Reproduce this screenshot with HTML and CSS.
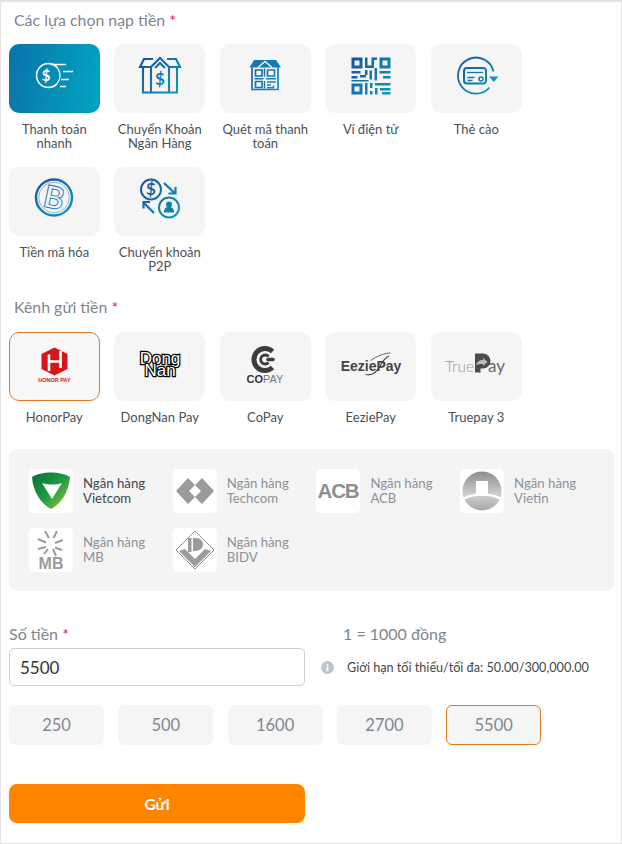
FILE: index.html
```html
<!DOCTYPE html>
<html lang="vi">
<head>
<meta charset="utf-8">
<title>Nạp tiền</title>
<link rel="stylesheet" href="styles.css">
</head>
<body>
<svg class="defs" aria-hidden="true"><defs>
<linearGradient id="bl" gradientUnits="userSpaceOnUse" x1="5" y1="3" x2="45" y2="40"><stop offset="0" stop-color="#1a4fa0"/><stop offset="1" stop-color="#0e9cc0"/></linearGradient>
<linearGradient id="vc" x1="0" y1="0" x2="1" y2="1"><stop offset="0" stop-color="#0b6f38"/><stop offset=".5" stop-color="#1f9a41"/><stop offset="1" stop-color="#9ccb3b"/></linearGradient>
<linearGradient id="vt" x1="0" y1="0" x2="0" y2="1"><stop offset="0" stop-color="#8c8c8c"/><stop offset=".6" stop-color="#cfcfcf"/><stop offset="1" stop-color="#a8a8a8"/></linearGradient>
</defs></svg>
<main class="page">
  <h2 class="head">Các lựa chọn nạp tiền <span class="req">*</span></h2>
  <div class="grid">
    <div class="opt"><div class="tile tile-on">
      <svg class="ico" viewBox="0 0 50 50" fill="none" stroke="#fff" stroke-width="1.500"><path d="M28 13A12 12 0 1 0 28 30"/><path d="M19 9.500A12 12 0 0 1 19 33.500" stroke-width="1.200"/><text x="17" y="27" class="t-dollar" fill="#fff" stroke="none">$</text><path d="M22 10.500h15M34 17.500h10M32 25.500h8M31 32.500h6"/></svg>
    </div><p class="cap">Thanh toán nhanh</p></div>
    <div class="opt"><div class="tile">
      <svg class="ico" viewBox="0 0 50 50" fill="none" stroke="url(#bl)" stroke-width="2.100"><path d="M16 13H5L9 5H18M32 5H41L45 13H34"/><path d="M8 13V38.500H42V13"/><path d="M16 38.500V13L25 4L34 13V38.500"/><path d="M20 14L25 9L30 14"/><text x="25" y="31" class="t-dollar big" fill="url(#bl)" stroke="none">$</text></svg>
    </div><p class="cap">Chuyển Khoản Ngân Hàng</p></div>
    <div class="opt"><div class="tile">
      <svg class="ico" viewBox="0 0 50 50" fill="none" stroke="url(#bl)" stroke-width="1.700"><path d="M9.500 13.500L14 6H36L41 13.500Z" fill="#1378b6" stroke="none"/><path d="M18 13.500L25 7.500L32 13.500" stroke="#f5f5f5" stroke-width="1.500"/><path d="M12 13.500V35.500H38V13.500"/><path d="M15.500 16h6.500v6h-6.500zM27.500 16h7v6h-7zM15.500 27.500h6.500v6h-6.500z"/><path d="M24.500 14.500v8M14.500 24.800h9M26 24.800h10M24.500 27v7.500M27 28h9M27 31h4M33.500 31.500v3M27 33.800h6" stroke-width="1.500"/></svg>
    </div><p class="cap">Quét mã thanh toán</p></div>
    <div class="opt"><div class="tile">
      <svg class="ico" viewBox="0 0 50 50" fill="url(#bl)" stroke="none"><path fill-rule="evenodd" d="M5.500 3.500h11v11h-11zM8.500 6.500v5h5v-5z"/><path fill-rule="evenodd" d="M33.500 3.500h11v11h-11zM36.500 6.500v5h5v-5z"/><path fill-rule="evenodd" d="M5.500 29.500h11v11h-11zM8.500 32.500v5h5v-5z"/><path d="M19 3.500h2.500v8h4v-8H31v2.500h-3v8h-9zM5.500 17h9v2.500h-9zM5.500 22h6v2.500h-6zM14 21h6v2.500h-6zM19 16h2.500v5H19zM23.500 16.500H26v9h-2.500zM28.500 14H31v12.500h-2.500zM33.500 17h11v2.500h-11zM37 22h7.500v2.500H37zM5.500 26h17v1.500h-17zM19 29h2.500v11.500H19zM24 29h2.500v5H24zM24 37h2.500v3.500H24zM29 29h15.500v2.500H29zM29 34h2.500v6.500H29zM34 34h10.500v2.500H34zM36 38h8.500v2.500H36z"/></svg>
    </div><p class="cap">Ví điện tử</p></div>
    <div class="opt"><div class="tile">
      <svg class="ico" viewBox="0 0 50 50" fill="none" stroke="url(#bl)" stroke-width="1.800"><path d="M38.500 33.500A18 18 0 1 1 42.500 17.500"/><path d="M38 22.500H47.500L42.800 28Z" fill="#1591bb" stroke="none"/><rect x="13" y="14" width="22" height="15.500" rx="3" stroke-width="2"/><path d="M16 18.500h16" stroke-width="1.300"/><path d="M16.500 23.500h7M16.500 26.500h5" stroke-width="1.300"/><circle cx="30" cy="25" r="2" stroke-width="1.500"/></svg>
    </div><p class="cap">Thẻ cào</p></div>
    <div class="opt"><div class="tile">
      <svg class="ico" viewBox="0 0 50 50" fill="none" stroke="url(#bl)" stroke-width="2.400"><circle cx="25" cy="20.500" r="18"/><circle cx="25" cy="20.500" r="15.300" stroke-width=".5"/><text x="25" y="31.500" class="t-btc" fill="none" stroke-width=".9" transform="rotate(12 25 20.500)">B</text></svg>
    </div><p class="cap">Tiền mã hóa</p></div>
    <div class="opt"><div class="tile">
      <svg class="ico" viewBox="0 0 50 50" fill="none" stroke="url(#bl)" stroke-width="2"><circle cx="16" cy="12.500" r="10"/><circle cx="34" cy="30.500" r="10"/><text x="16" y="18" class="t-dollar big" fill="#1a5ea8" stroke="none">$</text><circle cx="34" cy="27.500" r="3" fill="#0f7fb5" stroke="none"/><path d="M29 35.500c0-4 1.500-5.500 5-5.500s5 1.500 5 5.500z" fill="#0f7fb5" stroke="none"/><path d="M29 6L40 16.500M33.500 16.500H40.500V10" stroke-width="2.200"/><path d="M19 36L9 26M15 25H8.500V31.500" stroke-width="2.200"/></svg>
    </div><p class="cap">Chuyển khoản P2P</p></div>
  </div>

  <h2 class="head head-second">Kênh gửi tiền <span class="req">*</span></h2>
  <div class="grid">
    <div class="opt"><div class="tile tile-sel">
      <svg class="ico" viewBox="0 0 50 50"><path d="M25.500 5.500L38.500 12V27L25.500 33.500L12.500 27V12Z" fill="#d5161c"/><path d="M20 12.500V29M31.500 9V26M20 19.500H31.500" stroke="#fff" stroke-width="2.600" fill="none"/><text x="25.500" y="40" class="t-honor">HONOR PAY</text></svg>
    </div><p class="cap">HonorPay</p></div>
    <div class="opt"><div class="tile">
      <svg class="ico" viewBox="0 0 50 50"><text x="25" y="22" class="t-dong">Dong</text><text x="25" y="33.500" class="t-dong">Nan</text></svg>
    </div><p class="cap">DongNan Pay</p></div>
    <div class="opt"><div class="tile">
      <svg class="ico" viewBox="0 0 50 50" fill="none"><path d="M32.500 9.500A11 11 0 1 0 32.500 25.500" stroke="#3c3c3c" stroke-width="5"/><path d="M28.500 14.500A4.500 4.500 0 1 0 28.500 20.500" stroke="#3c3c3c" stroke-width="2.800"/><path d="M28 17.500H33" stroke="#3c3c3c" stroke-width="3.500" stroke-linecap="round"/><text x="25" y="41" class="t-copay"><tspan class="t-copay-b">CO</tspan>PAY</text></svg>
    </div><p class="cap">CoPay</p></div>
    <div class="opt"><div class="tile">
      <svg class="ico ico-wide" viewBox="0 0 64 50" fill="none"><path d="M26.500 32.500C34 34 38 30 41 24C43 20 46 16 50 14" stroke="#444" stroke-width="1.200"/><path d="M31.500 18.500C38 14 46 11 51.500 11" stroke="#444" stroke-width=".8"/><text x="32" y="28.500" class="t-eezie">EeziePay</text></svg>
    </div><p class="cap">EeziePay</p></div>
    <div class="opt"><div class="tile">
      <svg class="ico ico-wide" viewBox="0 0 64 50"><text x="1" y="29.500" class="t-true">True</text><path d="M31 11.500H39A7.500 7.500 0 0 1 39 26.500H36.500V30.500H31Z" fill="#4c4c4c"/><path d="M32 23C33.500 19 36 18 39 18V16L43.500 20L39 24V22C36.500 22 34 22 32 23Z" fill="#bdbdbd"/><text x="44" y="29.500" class="t-ay">ay</text></svg>
    </div><p class="cap">Truepay 3</p></div>
  </div>

  <section class="banks">
    <div class="bank bank-on"><div class="bank-logo">
      <svg class="blogo" viewBox="0 0 44 44"><path d="M3 8C12 2 32 2 41 8C40 22 33 34 22 40C11 34 4 22 3 8Z" fill="url(#vc)"/><path d="M13 14C20 16 27 16 33 14L23 30Z" fill="#fff"/></svg>
    </div><p class="bank-name">Ngân hàng Vietcom</p></div>
    <div class="bank"><div class="bank-logo">
      <svg class="blogo" viewBox="0 0 44 44"><path d="M3 22L15 9L22 16L16 22L22 28L15 35ZM41 22L29 9L22 16L28 22L22 28L29 35Z" fill="#9b9b9b"/></svg>
    </div><p class="bank-name">Ngân hàng Techcom</p></div>
    <div class="bank"><div class="bank-logo">
      <svg class="blogo" viewBox="0 0 44 44"><text x="22" y="29" class="t-acb">ACB</text></svg>
    </div><p class="bank-name">Ngân hàng ACB</p></div>
    <div class="bank"><div class="bank-logo">
      <svg class="blogo" viewBox="0 0 44 44"><circle cx="22" cy="22" r="19.500" fill="url(#vt)"/><path d="M16 12H28V27H16Z" fill="#fff"/><path d="M3 30C14 24 30 24 41 30" stroke="#fff" stroke-width="2.500" fill="none"/></svg>
    </div><p class="bank-name">Ngân hàng Vietin</p></div>
    <div class="bank"><div class="bank-logo">
      <svg class="blogo" viewBox="0 0 44 44"><path d="M16 3L20 10M28 3L24.500 10M9 11L17 14.500M34 12L26 15M9 21L17 19M33 22L26 19.500M15 26L19 21M27 28L24 21" stroke="#9b9b9b" stroke-width="2" fill="none"/><text x="22" y="41" class="t-mb">MB</text></svg>
    </div><p class="bank-name">Ngân hàng MB</p></div>
    <div class="bank"><div class="bank-logo">
      <svg class="blogo" viewBox="0 0 44 44"><path d="M22 3L41 22L22 41L3 22Z" fill="none" stroke="#8f8f8f" stroke-width="1"/><path d="M6 23L22 39L38 23L32 21L22 31L12 21Z" fill="#9b9b9b"/><path d="M15 10h3.500v14H15zM20 10h2c6 0 8 3 8 6.500S27 23 22 23h-2z" fill="#9b9b9b"/></svg>
    </div><p class="bank-name">Ngân hàng BIDV</p></div>
  </section>

  <section class="amount">
    <div class="amount-left">
      <label class="field-label" for="amt">Số tiền <span class="req">*</span></label>
      <input class="field" id="amt" value="5500">
    </div>
    <div class="amount-right">
      <p class="rate">1 = 1000 đồng</p>
      <div class="limit">
        <svg class="info" viewBox="0 0 14 14"><circle cx="7" cy="7" r="7" fill="#bcc5cc"/><rect x="6" y="6" width="2" height="5" fill="#fff"/><circle cx="7" cy="4" r="1.100" fill="#fff"/></svg>
        <span>Giới hạn tối thiểu/tối đa: 50.00/300,000.00</span>
      </div>
    </div>
  </section>

  <div class="chips">
    <div class="chip">250</div>
    <div class="chip">500</div>
    <div class="chip">1600</div>
    <div class="chip">2700</div>
    <div class="chip chip-on">5500</div>
  </div>

  <button class="submit" type="button">Gửi</button>
</main>
</body>
</html>
```
FILE: styles.css
```css
* { box-sizing: border-box; }
html, body { margin: 0; padding: 0; background: #fff; }
body { font-family: "Lato", "Open Sans", sans-serif; color: #3f474d; }
.defs { display: block; width: 0; height: 0; }
p, h2 { margin: 0; }

.page {
  width: 622px;
  height: 844px;
  border: 1px solid #e4e4e4;
  border-width: 2px 1px 1px 1px;
  padding: 8px 8px 0;
  overflow: hidden;
}

.head { font-size: 15.900px; font-weight: 400; line-height: 20px; color: #7d868c; margin: 0 0 14px 5px; }
.head-second { margin-top: 24px; margin-bottom: 15px; }
.req { color: #e0204f; }

.grid { display: grid; grid-template-columns: repeat(5, 90.600px); column-gap: 14.900px; row-gap: 17px; }
.opt { display: flex; flex-direction: column; align-items: center; }
.tile {
  width: 90.600px; height: 69px; border-radius: 10px; background: #f5f5f5; flex: none;
  display: flex; align-items: center; justify-content: center; border: 1px solid #f5f5f5;
}
.tile-on { background: linear-gradient(100deg, #0a74a8, #02a5c2); border: 0; }
.tile-sel { border: 1px solid #e07a22; background: #f7f7f7; }
.ico { width: 50px; height: 50px; display: block; }
.ico-wide { width: 64px; }
.cap { margin-top: 9px; font-size: 13px; line-height: 14px; text-align: center; color: #4a5157; width: 100px; }

.t-dollar { font: 700 15px "Lato", sans-serif; text-anchor: middle; }
.t-dollar.big { font-size: 17px; }
.t-btc { font: 700 31px "Lato", sans-serif; text-anchor: middle; }
.t-honor { font: 900 5.500px "Liberation Sans", sans-serif; fill: #d5161c; text-anchor: middle; }
.t-dong { font: 400 17px "Liberation Sans", sans-serif; text-anchor: middle; fill: #fff; stroke: #000; stroke-width: 2.500px; paint-order: stroke; }
.t-copay { font: 400 11px "Liberation Sans", sans-serif; fill: #777; text-anchor: middle; }
.t-copay-b { font-weight: 700; fill: #333; }
.t-eezie { font: 700 14px "Liberation Sans", sans-serif; fill: #444; text-anchor: middle; }
.t-true { font: 300 15.500px "Lato", sans-serif; fill: #999; }
.t-ay { font: 400 17px "Lato", sans-serif; fill: #666; }
.t-acb { font: 900 20.500px "Liberation Sans", sans-serif; fill: #8f8f8f; text-anchor: middle; letter-spacing: -1.200px; }
.t-mb { font: 900 16px "Liberation Sans", sans-serif; fill: #9b9b9b; text-anchor: middle; }

.banks {
  margin-top: 25px; background: #f4f4f5; border-radius: 9px; width: 605px; height: 142px;
  padding: 20px; display: grid; grid-template-columns: repeat(4, 143.700px); grid-auto-rows: 44px; row-gap: 15px;
}
.bank { display: flex; align-items: center; gap: 10px; }
.bank-logo { width: 44px; height: 44px; background: #fff; border-radius: 5px; flex: none; }
.blogo { width: 44px; height: 44px; display: block; }
.bank-name { font-size: 13.200px; line-height: 15px; width: 70px; color: #8a9299; }
.bank-on .bank-name { color: #3f474d; }

.amount { margin-top: 33px; display: grid; grid-template-columns: 296px 1fr; column-gap: 16px; }
.field-label { display: block; font-size: 16px; line-height: 20px; color: #7d868c; margin-bottom: 4px; }
.field {
  display: block; width: 296px; height: 38px; border: 1px solid #ccd0d4; border-radius: 5px;
  padding: 0 10px; font: 400 17px "Lato", sans-serif; color: #333; background: #fff;
}
.rate { font-size: 16px; line-height: 20px; color: #7d868c; padding-left: 22px; margin-bottom: 4px; }
.limit { display: flex; align-items: center; gap: 13px; height: 38px; font-size: 12.650px; color: #3f474d; }
.info { width: 13px; height: 13px; flex: none; }

.chips { margin-top: 19px; display: flex; gap: 14.300px; }
.chip {
  width: 95px; height: 40px; border-radius: 6px; background: #f5f5f5; color: #7e8890;
  font-size: 16.500px; display: flex; align-items: center; justify-content: center;
}
.chip-on { border: 1px solid #e07a22; }

.submit {
  display: block; margin-top: 39px; width: 296px; height: 39px; border: 0; border-radius: 8px;
  background: #ff8500; color: #fff; font: 700 15.500px "Lato", sans-serif;
}
```
